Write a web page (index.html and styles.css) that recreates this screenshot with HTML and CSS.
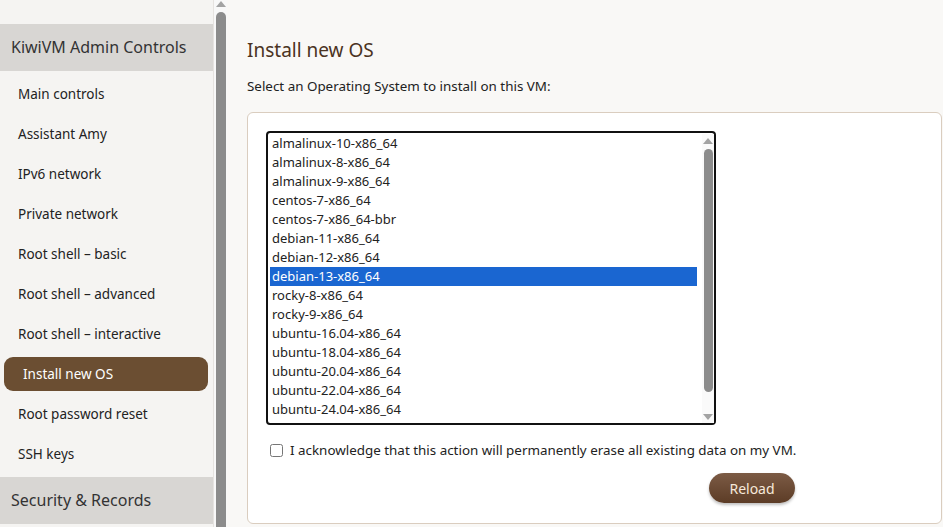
FILE: index.html
```html
<!DOCTYPE html>
<html lang="en">
<head>
    <meta charset="UTF-8">
    <meta name="viewport" content="width=device-width, initial-scale=1.0">
    <title>KiwiVM - Install new OS</title>
    <link rel="stylesheet" href="styles.css">
</head>
<body>

<div class="layout">
    <div class="sidebar">
        <div class="side-head">KiwiVM Admin Controls</div>
        <ul class="side-menu">
            <li><a href="#">Main controls</a></li>
            <li><a href="#">Assistant Amy</a></li>
            <li><a href="#">IPv6 network</a></li>
            <li><a href="#">Private network</a></li>
            <li><a href="#">Root shell &ndash; basic</a></li>
            <li><a href="#">Root shell &ndash; advanced</a></li>
            <li><a href="#">Root shell &ndash; interactive</a></li>
            <li class="active"><a href="#">Install new OS</a></li>
            <li><a href="#">Root password reset</a></li>
            <li><a href="#">SSH keys</a></li>
        </ul>
        <div class="side-head">Security &amp; Records</div>
    </div>

    <div class="side-scroll">
        <span class="arrow-up"></span>
        <span class="thumb"></span>
    </div>

    <div class="main">
        <h2>Install new OS</h2>
        <p class="lead">Select an Operating System to install on this VM:</p>

        <div class="card">
            <div class="listbox">
                <ul class="os-list">
                    <li>almalinux-10-x86_64</li>
                    <li>almalinux-8-x86_64</li>
                    <li>almalinux-9-x86_64</li>
                    <li>centos-7-x86_64</li>
                    <li>centos-7-x86_64-bbr</li>
                    <li>debian-11-x86_64</li>
                    <li>debian-12-x86_64</li>
                    <li class="selected">debian-13-x86_64</li>
                    <li>rocky-8-x86_64</li>
                    <li>rocky-9-x86_64</li>
                    <li>ubuntu-16.04-x86_64</li>
                    <li>ubuntu-18.04-x86_64</li>
                    <li>ubuntu-20.04-x86_64</li>
                    <li>ubuntu-22.04-x86_64</li>
                    <li>ubuntu-24.04-x86_64</li>
                </ul>
                <div class="list-scroll">
                    <span class="arrow-up"></span>
                    <span class="thumb"></span>
                    <span class="arrow-down"></span>
                </div>
            </div>

            <label class="confirm">
                <input type="checkbox" id="ack">
                <span>I acknowledge that this action will permanently erase all existing data on my VM.</span>
            </label>

            <div class="actions">
                <button type="button" class="button_reload">Reload</button>
            </div>
        </div>
    </div>
</div>

</body>
</html>
```

FILE: styles.css
```css
body {
    font-family: "Noto Sans", Arial, sans-serif;
    font-size: 13.4px;
    color: #222;
    margin: 0;
    background-color: #f9f8f6;
    overflow: hidden;
}

.layout {
    display: flex;
    height: 527px;
}

/* left menu */
.sidebar {
    width: 213px;
    flex-shrink: 0;
    background-color: #f5f4f2;
    border-right: 1px solid #e6e3e0;
    padding-top: 24px;
}

.side-head {
    height: 47px;
    line-height: 47px;
    padding-left: 11px;
    background-color: #d8d6d3;
    color: #333;
    font-size: 16px;
}

.side-menu {
    list-style: none;
    margin: 0;
    padding: 3px 0 3px 0;
}

.side-menu li a {
    display: block;
    height: 40px;
    line-height: 40px;
    padding-left: 18px;
    color: #222;
    text-decoration: none;
    font-size: 13.5px;
}

.side-menu li.active a {
    height: 34px;
    line-height: 34px;
    margin: 3px 5px 3px 4px;
    padding-left: 19px;
    background-color: #6b4e32;
    color: #fff;
    border-radius: 9px;
}

/* fake scrollbars */
.side-scroll {
    width: 13px;
    flex-shrink: 0;
    background-color: #f8f8f8;
    display: flex;
    flex-direction: column;
    align-items: center;
}

.arrow-up,
.arrow-down {
    width: 0;
    height: 0;
    border-left: 5px solid transparent;
    border-right: 5px solid transparent;
}

.arrow-up {
    border-bottom: 6px solid #a3a3a3;
    margin-top: 1px;
}

.arrow-down {
    border-top: 6px solid #a3a3a3;
}

.thumb {
    width: 9px;
    flex: 1;
    background-color: #8c8c8c;
    border-radius: 5px;
}

.side-scroll .thumb {
    width: 10px;
    margin-top: 5px;
    border-radius: 5px 5px 0 0;
}

/* content */
.main {
    flex: 1;
    padding: 0 1px 0 20px;
}

h2 {
    margin: 38px 0 0;
    font-size: 19px;
    font-weight: normal;
    color: #4b3322;
    line-height: 24px;
}

.lead {
    margin: 14px 0 0;
    line-height: 20px;
}

.card {
    margin-top: 16px;
    background: #fff;
    border: 1px solid #dacdbf;
    border-radius: 6px;
    padding: 18px 18px 20px;
}

.listbox {
    width: 444px;
    height: 289px;
    border: 2px solid #111;
    border-radius: 4px;
    display: flex;
    padding: 1px 0 0 2px;
    box-sizing: content-box;
}

.os-list {
    list-style: none;
    margin: 0;
    padding: 0;
    width: 427px;
}

.os-list li {
    height: 19px;
    line-height: 19px;
    padding-left: 2px;
    font-size: 13px;
    color: #222;
}

.os-list li.selected {
    background-color: #1a66d1;
    color: #fff;
}

.list-scroll {
    margin-left: 5px;
    width: 12px;
    display: flex;
    flex-direction: column;
    align-items: center;
    padding: 3px 0 3px;
    background-color: #fafafa;
}

.list-scroll .thumb {
    margin: 5px 0 22px;
    width: 9px;
}

.confirm {
    display: flex;
    align-items: center;
    margin-top: 16px;
    padding-left: 4px;
    gap: 7px;
}

.confirm input {
    margin: 0;
    width: 13px;
    height: 13px;
}

.actions {
    display: flex;
    justify-content: flex-end;
    padding-right: 128px;
    margin-top: 14px;
}

.button_reload {
    width: 86px;
    height: 30px;
    border: none;
    border-radius: 15px;
    background: linear-gradient(#7c5b45, #5c3c26);
    color: #f6e8da;
    font-family: inherit;
    font-size: 14px;
    box-shadow: 0 2px 3px rgba(0, 0, 0, 0.25);
    cursor: pointer;
}
```
